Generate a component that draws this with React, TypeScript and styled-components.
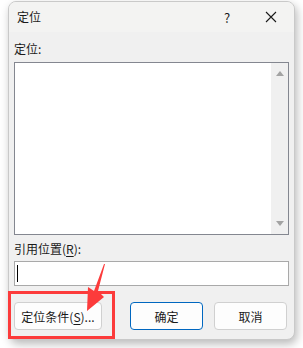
import React from "react";
import styled, { createGlobalStyle } from "styled-components";

const Global = createGlobalStyle`
  html, body { margin: 0; padding: 0; background: #ffffff; }
  body { font-family: "Microsoft YaHei UI", "Noto Sans CJK SC", "Noto Sans", sans-serif; font-size: 12px; color: #1a1a1a; }
`;

const Page = styled.div`
  position: relative;
  width: 303px;
  height: 348px;
  padding: 1px 8px 0 8px;
  box-sizing: border-box;
  overflow: hidden;
`;

const Win = styled.div`
  width: 287px;
  height: 339px;
  box-sizing: border-box;
  border: 1px solid #c9c9c9;
  border-radius: 8px;
  background: #f0f0f0;
  box-shadow: 2px 4px 10px rgba(0, 0, 0, 0.28);
  display: flex;
  flex-direction: column;
  overflow: hidden;
`;

const TitleBar = styled.div`
  height: 30px;
  flex: none;
  background: #f3f3f2;
  display: flex;
  align-items: center;
  padding-left: 8px;
`;

const Title = styled.div`
  flex: 1;
  font-size: 12px;
  line-height: 16px;
  color: #1a1a1a;
`;

const TitleBtn = styled.div<{ $w: number }>`
  width: ${(p) => p.$w}px;
  height: 30px;
  display: flex;
  align-items: center;
  justify-content: center;
  font-size: 13px;
  color: #1a1a1a;
`;

const Content = styled.div`
  flex: 1;
  display: flex;
  flex-direction: column;
  padding: 9px 5px 0 5px;
`;

const Label = styled.div<{ $mt: number }>`
  margin-top: ${(p) => p.$mt}px;
  font-size: 12px;
  line-height: 16px;
  height: 16px;
  color: #1a1a1a;
`;

const ListBox = styled.div`
  margin-top: 5px;
  height: 173px;
  box-sizing: border-box;
  border: 1px solid #848790;
  background: #ffffff;
  display: flex;
  justify-content: flex-end;
`;

const ScrollBar = styled.div`
  width: 17px;
  background: #f0f0f0;
  display: flex;
  flex-direction: column;
  justify-content: space-between;
  align-items: center;
  padding: 8px 0 8px 0;
`;

const Arrow = styled.div<{ $down?: boolean }>`
  width: 0;
  height: 0;
  border-left: 4px solid transparent;
  border-right: 4px solid transparent;
  ${(p) =>
    p.$down
      ? "border-top: 5px solid #a3a3a3;"
      : "border-bottom: 5px solid #a3a3a3;"}
`;

const Input = styled.div`
  margin-top: 4px;
  height: 25px;
  box-sizing: border-box;
  border: 1px solid #a9a9a9;
  background: #ffffff;
  display: flex;
  align-items: center;
  padding-left: 2px;
`;

const Caret = styled.div`
  width: 1px;
  height: 17px;
  background: #000000;
`;

const ButtonRow = styled.div`
  margin-top: 16px;
  display: flex;
  padding-right: 2px;
`;

const Button = styled.div<{ $w: number; $ml: number; $primary?: boolean }>`
  width: ${(p) => p.$w}px;
  margin-left: ${(p) => p.$ml}px;
  height: 28px;
  box-sizing: border-box;
  border: 1px solid ${(p) => (p.$primary ? "#0067c0" : "#d0d0d0")};
  border-radius: 4px;
  background: #fdfdfd;
  display: flex;
  align-items: center;
  justify-content: center;
  font-size: 12px;
  color: #1a1a1a;
`;

const U = styled.span`
  text-decoration: underline;
  text-underline-offset: 2px;
`;

const RedBox = styled.div`
  position: absolute;
  left: 8px;
  top: 291px;
  width: 107px;
  height: 48px;
  box-sizing: border-box;
  border: 3px solid #fc3b3b;
  pointer-events: none;
`;

const ArrowSvg = styled.svg`
  position: absolute;
  left: 0;
  top: 0;
  pointer-events: none;
`;

export default function App() {
  return (
    <>
      <Global />
      <Page>
        <Win>
          <TitleBar>
            <Title>定位</Title>
            <TitleBtn $w={42}>?</TitleBtn>
            <TitleBtn $w={46}>
              <svg width="12" height="12" viewBox="0 0 12 12">
                <path d="M1 1 L11 11 M11 1 L1 11" stroke="#1a1a1a" strokeWidth="1.1" fill="none" />
              </svg>
            </TitleBtn>
          </TitleBar>
          <Content>
            <Label $mt={0}>定位:</Label>
            <ListBox>
              <ScrollBar>
                <Arrow />
                <Arrow $down />
              </ScrollBar>
            </ListBox>
            <Label $mt={6}>
              引用位置(<U>R</U>):
            </Label>
            <Input>
              <Caret />
            </Input>
            <ButtonRow>
              <Button $w={88} $ml={0}>
                定位条件(<U>S</U>)...
              </Button>
              <Button $w={73} $ml={28} $primary>
                确定
              </Button>
              <Button $w={73} $ml={11}>
                取消
              </Button>
            </ButtonRow>
          </Content>
        </Win>
        <RedBox />
        <ArrowSvg width="303" height="348" viewBox="0 0 303 348">
          <polygon
            points="105,264 98,291 104,297 87,311 88,287 94,291 104,264"
            fill="#fc3b3b"
          />
        </ArrowSvg>
      </Page>
    </>
  );
}
